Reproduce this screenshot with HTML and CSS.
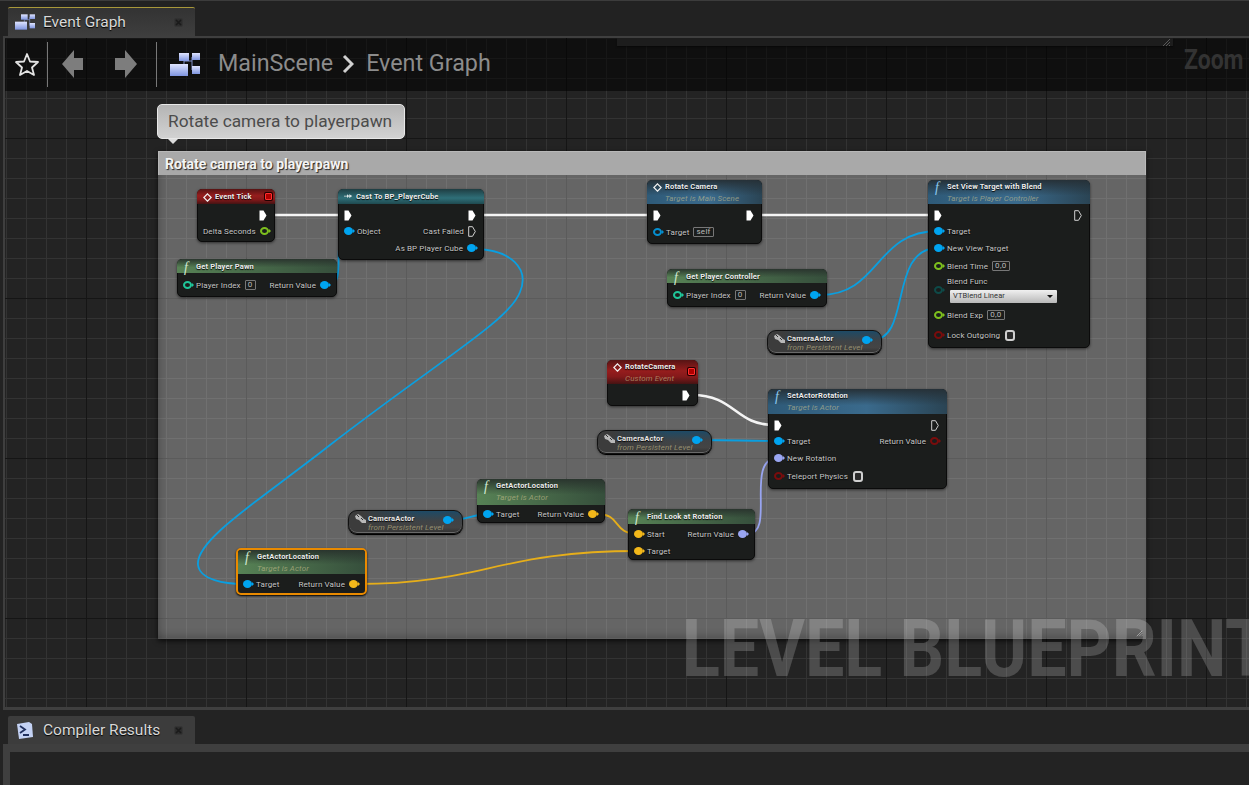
FILE: index.html
```html
<!DOCTYPE html>
<html lang="en">
<head>
<meta charset="utf-8">
<title>Event Graph</title>
<link rel="stylesheet" href="styles.css">
</head>
<body>
<svg class="defs" width="0" height="0" aria-hidden="true">
  <symbol id="exec" viewBox="0 0 8 11"><path d="M.5.5H4.500L7.500 5.500 4.500 10.500H.5Z" fill="#fff"/></symbol>
  <symbol id="exec-o" viewBox="0 0 8 11"><path d="M.7.7H4.500L7.300 5.500 4.500 10.300H.7Z" fill="none" stroke="#d0d0d0" stroke-width="1"/></symbol>
  <symbol id="diamond" viewBox="0 0 11 11"><path d="M5.500 1 10 5.500 5.500 10 1 5.500Z" fill="none" stroke="#f0f0f0" stroke-width="1.500"/></symbol>
  <symbol id="actor" viewBox="0 0 13 10"><path d="M1 2 4 0 7 2 10 5 12 6 12 9 8 9 5 6 2 5Z" fill="#b8b8b8"/><path d="M3 1 5 3M7 4 9 6" stroke="#333" stroke-width="1"/></symbol>
  <symbol id="cast" viewBox="0 0 12 7"><path d="M0 3H4V1L7 3.500 4 6V4H0ZM7 1 11 3.500 7 6Z" fill="#dfe8e8"/></symbol>
  <symbol id="blocks" viewBox="0 0 30 23">
    <defs><linearGradient id="bg" x1="0" y1="0" x2="0" y2="1"><stop offset="0" stop-color="#dfe4ff"/><stop offset="1" stop-color="#7f95e0"/></linearGradient></defs>
    <path d="M14 8H22M14 8V12M22 4V17" stroke="#8090c8" stroke-width="1"/>
    <rect x="9" y="0" width="10" height="8" fill="url(#bg)"/><rect x="22" y="0" width="8" height="7" fill="url(#bg)"/>
    <rect x="0" y="11" width="18" height="12" fill="url(#bg)"/><rect x="22" y="13" width="8" height="8" fill="url(#bg)"/>
  </symbol>
  <symbol id="close" viewBox="0 0 9 9"><rect x=".5" y=".5" width="8" height="8" rx="1" fill="#2c2c2c"/><path d="M2 2 7 7M7 2 2 7" stroke="#1a1a1a" stroke-width="1.500"/></symbol>
</svg>

<header class="well well-top">
  <div class="tab tab-active">
    <svg class="tab-icon" width="20" height="16"><use href="#blocks"/></svg>
    <span class="tab-label">Event Graph</span>
    <svg class="tab-close" width="9" height="9"><use href="#close"/></svg>
  </div>
</header>

<main class="graph-panel">
  <div class="canvas">
    <section class="comment">
      <h2 class="comment-head">Rotate camera to playerpawn</h2>
      <svg class="grip" width="7" height="7" viewBox="0 0 9 9"><path d="M1 8 8 1M4 8 8 4M7 8 8 7" stroke="#b4b4b4" stroke-width="1"/></svg>
    </section>
    <div class="bubble">Rotate camera to playerpawn</div>

    <svg class="wires" width="1244" height="669" viewBox="5 38 1244 669" fill="none">
      <g stroke="#f4f4f4" stroke-width="2.600">
        <path d="M270 215H344M478 215H654M758 215H934"/>
        <path d="M692 395C735 395 735 425 774 425"/>
      </g>
      <g stroke="#0a9fe0" stroke-width="1.800">
        <path d="M476 249C510 250 530 268 520 292C510 320 440 360 330 445C260 500 195 540 198 565C200 580 225 584 244 584"/>
        <path d="M330 285C347 285 330 231 348 231"/>
        <path d="M820 295C880 295 875 231 938 231"/>
        <path d="M872 340C912 340 888 248 938 248"/>
        <path d="M702 440C730 440 750 441 778 441"/>
        <path d="M453 520C465 520 475 514 488 514"/>
      </g>
      <g stroke="#e6ae1a" stroke-width="1.800">
        <path d="M597 514C622 514 612 534 638 534"/>
        <path d="M358 584C480 584 500 551 638 551"/>
      </g>
      <path d="M748 534C776 534 744 458 778 458" stroke="#98a4f0" stroke-width="1.800"/>
    </svg>

    <div class="brand">LEVEL BLUEPRINT</div>

    <article class="node n-tick">
      <div class="head h-red h15"><svg class="ico" width="9" height="9"><use href="#diamond"/></svg><span class="title">Event Tick</span><i class="delegate d-tick"></i></div>
      <div class="body">
        <div class="row r16"><span class="side"></span><span class="side"><svg class="pe"><use href="#exec"/></svg></span></div>
        <div class="row r16"><span class="side"></span><span class="side"><span class="lbl">Delta Seconds</span><i class="pin ring green"></i></span></div>
      </div>
    </article>

    <article class="node n-cast">
      <div class="head h-teal h15"><svg class="ico" width="9" height="6"><use href="#cast"/></svg><span class="title">Cast To BP_PlayerCube</span></div>
      <div class="body">
        <div class="row r16"><span class="side"><svg class="pe"><use href="#exec"/></svg></span><span class="side"><svg class="pe"><use href="#exec"/></svg></span></div>
        <div class="row r16"><span class="side"><i class="pin blue"></i><span class="lbl">Object</span></span><span class="side"><span class="lbl">Cast Failed</span><svg class="pe"><use href="#exec-o"/></svg></span></div>
        <div class="row r18"><span class="side"></span><span class="side"><span class="lbl">As BP Player Cube</span><i class="pin blue"></i></span></div>
      </div>
    </article>

    <article class="node n-pawn">
      <div class="head h-green h14"><span class="fn">f</span><span class="title">Get Player Pawn</span></div>
      <div class="body">
        <div class="row r18"><span class="side"><i class="pin ring mint"></i><span class="lbl">Player Index</span><span class="box">0</span></span><span class="side"><span class="lbl">Return Value</span><i class="pin blue"></i></span></div>
      </div>
    </article>

    <article class="node n-rc">
      <div class="head h-blue h24"><svg class="ico" width="9" height="9"><use href="#diamond"/></svg><div><div class="title">Rotate Camera</div><div class="sub">Target is Main Scene</div></div></div>
      <div class="body">
        <div class="row r16"><span class="side"><svg class="pe"><use href="#exec"/></svg></span><span class="side"><svg class="pe"><use href="#exec"/></svg></span></div>
        <div class="row r18"><span class="side"><i class="pin ring sky"></i><span class="lbl">Target</span><span class="box">self</span></span></div>
      </div>
    </article>

    <article class="node n-svt">
      <div class="head h-blue h24"><span class="fn">f</span><div><div class="title">Set View Target with Blend</div><div class="sub">Target is Player Controller</div></div></div>
      <div class="body">
        <div class="row r16"><span class="side"><svg class="pe"><use href="#exec"/></svg></span><span class="side"><svg class="pe"><use href="#exec-o"/></svg></span></div>
        <div class="row r16"><span class="side"><i class="pin blue"></i><span class="lbl">Target</span></span></div>
        <div class="row r18"><span class="side"><i class="pin blue"></i><span class="lbl">New View Target</span></span></div>
        <div class="row r18"><span class="side"><i class="pin ring green"></i><span class="lbl">Blend Time</span><span class="box">0,0</span></span></div>
        <div class="row r30"><span class="side"><i class="pin ring dteal"></i><span class="stack"><span class="lbl">Blend Func</span><span class="select">VTBlend Linear<i class="caret"></i></span></span></span></div>
        <div class="row r20"><span class="side"><i class="pin ring green"></i><span class="lbl">Blend Exp</span><span class="box">0,0</span></span></div>
        <div class="row r20"><span class="side"><i class="pin ring dred"></i><span class="lbl">Lock Outgoing</span><span class="check"></span></span></div>
      </div>
    </article>

    <article class="node n-gpc">
      <div class="head h-green h14"><span class="fn">f</span><span class="title">Get Player Controller</span></div>
      <div class="body">
        <div class="row r18"><span class="side"><i class="pin ring mint"></i><span class="lbl">Player Index</span><span class="box">0</span></span><span class="side"><span class="lbl">Return Value</span><i class="pin blue"></i></span></div>
      </div>
    </article>

    <article class="pill n-cam1">
      <svg class="pill-ico" width="13" height="10"><use href="#actor"/></svg>
      <div class="pill-text"><div class="title">CameraActor</div><div class="sub">from Persistent Level</div></div>
      <i class="pin blue pill-pin"></i>
    </article>

    <article class="node n-rce">
      <div class="head h-red h24"><svg class="ico" width="9" height="9"><use href="#diamond"/></svg><div><div class="title">RotateCamera</div><div class="sub">Custom Event</div></div><i class="delegate d-rce"></i></div>
      <div class="body">
        <div class="row r16"><span class="side"></span><span class="side"><svg class="pe"><use href="#exec"/></svg></span></div>
      </div>
    </article>

    <article class="node n-sar">
      <div class="head h-blue h25"><span class="fn">f</span><div><div class="title">SetActorRotation</div><div class="sub">Target is Actor</div></div></div>
      <div class="body">
        <div class="row r16"><span class="side"><svg class="pe"><use href="#exec"/></svg></span><span class="side"><svg class="pe"><use href="#exec-o"/></svg></span></div>
        <div class="row r16"><span class="side"><i class="pin blue"></i><span class="lbl">Target</span></span><span class="side"><span class="lbl">Return Value</span><i class="pin ring dred"></i></span></div>
        <div class="row r17"><span class="side"><i class="pin peri"></i><span class="lbl">New Rotation</span></span></div>
        <div class="row r20"><span class="side"><i class="pin ring dred"></i><span class="lbl">Teleport Physics</span><span class="check"></span></span></div>
      </div>
    </article>

    <article class="pill n-cam2">
      <svg class="pill-ico" width="13" height="10"><use href="#actor"/></svg>
      <div class="pill-text"><div class="title">CameraActor</div><div class="sub">from Persistent Level</div></div>
      <i class="pin blue pill-pin"></i>
    </article>

    <article class="node n-gal1">
      <div class="head h-green h26"><span class="fn">f</span><div><div class="title">GetActorLocation</div><div class="sub">Target is Actor</div></div></div>
      <div class="body tight">
        <div class="row r16"><span class="side"><i class="pin blue"></i><span class="lbl">Target</span></span><span class="side"><span class="lbl">Return Value</span><i class="pin yellow"></i></span></div>
      </div>
    </article>

    <article class="pill n-cam3">
      <svg class="pill-ico" width="13" height="10"><use href="#actor"/></svg>
      <div class="pill-text"><div class="title">CameraActor</div><div class="sub">from Persistent Level</div></div>
      <i class="pin blue pill-pin"></i>
    </article>

    <article class="node n-flr">
      <div class="head h-green h15"><span class="fn">f</span><span class="title">Find Look at Rotation</span></div>
      <div class="body tight2">
        <div class="row r16"><span class="side"><i class="pin yellow"></i><span class="lbl">Start</span></span><span class="side"><span class="lbl">Return Value</span><i class="pin peri"></i></span></div>
        <div class="row r17"><span class="side"><i class="pin yellow"></i><span class="lbl">Target</span></span></div>
      </div>
    </article>

    <article class="node n-gal2 selected">
      <div class="head h-green h24"><span class="fn">f</span><div><div class="title">GetActorLocation</div><div class="sub">Target is Actor</div></div></div>
      <div class="body tight2 selected-body">
        <div class="row r16"><span class="side"><i class="pin blue"></i><span class="lbl">Target</span></span><span class="side"><span class="lbl">Return Value</span><i class="pin yellow"></i></span></div>
      </div>
    </article>

    <div class="crumbbar">
      <svg class="star" width="26" height="25" viewBox="0 0 26 25"><path d="M13 2 16 9.500 24 10 18 15.500 20 23 13 19 6 23 8 15.500 2 10 10 9.500Z" fill="none" stroke="#e4e4e4" stroke-width="1.800" stroke-linejoin="round"/></svg>
      <span class="vsep sep-a"></span>
      <svg class="nav nav-back" width="21" height="29" viewBox="0 0 21 29"><path d="M0 14 12 0V8H21V20H12V28Z" fill="#7d7d7d"/></svg>
      <svg class="nav nav-fwd" width="22" height="29" viewBox="0 0 22 29"><path d="M22 14 10 0V8H0V20H10V28Z" fill="#7d7d7d"/></svg>
      <span class="vsep sep-b"></span>
      <svg class="crumb-icon" width="30" height="23"><use href="#blocks"/></svg>
      <span class="crumb">MainScene</span>
      <svg class="chev" width="12" height="20" viewBox="0 0 12 20"><path d="M2 2 10 10 2 18" fill="none" stroke="#d0d0d0" stroke-width="3"/></svg>
      <span class="crumb crumb-last">Event Graph</span>
      <span class="zoom">Zoom</span>
    </div>

    <div class="findstrip"><svg width="9" height="7" viewBox="0 0 9 7"><path d="M1 7 8 0M4 7 8 3M7 7 8 6" stroke="#5a5a5a" stroke-width="1"/></svg></div>
  </div>
</main>

<div class="well well-bottom">
  <div class="tab tab-plain">
    <svg class="tab-icon" width="19" height="19" viewBox="0 0 19 19"><path d="M2 3 14 1 17 3 18 16 4 18Z" fill="#c4d2f4"/><path d="M5 5 10 8.500 5 12M8 14H14" fill="none" stroke="#20305e" stroke-width="1.800"/></svg>
    <span class="tab-label">Compiler Results</span>
    <svg class="tab-close" width="9" height="9"><use href="#close"/></svg>
  </div>
</div>
<section class="results"></section>
</body>
</html>
```
FILE: styles.css
```css
* { box-sizing: border-box; }
html, body { margin: 0; height: 100%; }
body {
  width: 1249px; height: 785px; overflow: hidden;
  display: flex; flex-direction: column;
  background: #232323;
  font-family: Roboto, "Liberation Sans", sans-serif;
}
.defs { position: absolute; }

.well { flex: none; display: flex; align-items: flex-end; padding-left: 8px; }
.well-top { height: 36px; border-top: 1px solid #3c3c3c; background: #222; }
.well-bottom { height: 34px; }
.tab {
  width: 187px; display: flex; align-items: center;
  background: linear-gradient(#333, #3e3e3e);
  border-radius: 2px 2px 0 0; padding-left: 7px;
  color: #d8d8d8; font-size: 15.500px;
  text-shadow: 0 1px 1px #000;
}
.tab-active { height: 29px; border-top: 1px solid #a8983a; }
.tab-plain { height: 28px; background: #3c3c3c; }
.tab-icon { flex: none; margin-right: 9px; }
.tab-active .tab-icon { margin-right: 8px; }
.tab-label { flex: 1; }
.tab-close { flex: none; margin-right: 12px; }

.graph-panel {
  flex: none; height: 674px; margin-left: 3px;
  border: solid #3f3f3f; border-width: 2px 0 3px 2px;
}
.canvas {
  position: relative; width: 1244px; height: 669px; overflow: hidden;
  background-color: #232323;
  background-image:
    linear-gradient(90deg, #151515 1px, transparent 1px),
    linear-gradient(#151515 1px, transparent 1px),
    linear-gradient(90deg, #333 1px, transparent 1px),
    linear-gradient(#333 1px, transparent 1px);
  background-size: 160px 160px, 160px 160px, 20px 20px, 20px 20px;
  background-position: 81px 0, 0 100px, 1px 0, 0 0;
}
.results { flex: 1; margin-left: 3px; border: solid #3f3f3f; border-width: 8px 0 0 7px; background: #232323; }

/* comment box */
.comment {
  position: absolute; left: 153px; top: 113px; width: 988px; height: 488px;
  background: rgba(255, 255, 255, .3);
  box-shadow: 0 2px 5px rgba(0, 0, 0, .7), inset 8px 0 8px -6px rgba(0, 0, 0, .22), inset 0 -9px 8px -6px rgba(0, 0, 0, .2);
}
.comment-head {
  margin: 0; height: 24px; padding: 4px 6px;
  background: #a9a9a9; border: 1px solid #b8b8b8; border-width: 1px 1px 0 1px;
  color: #f4f4f4; font-size: 14px; line-height: 17px; font-weight: 700;
  text-shadow: 1px 1px 1px #222;
}
.grip { position: absolute; right: 3px; bottom: 2px; }
.bubble {
  position: absolute; left: 152px; top: 66px; width: 248px; height: 35px;
  border: 1px solid #e8e8e8; border-radius: 5px;
  background: linear-gradient(#b4b4b4, #d2d2d2);
  color: #4c4c4c; font-size: 17.300px; line-height: 33px; padding-left: 10px;
}
.bubble::after {
  content: ""; position: absolute; left: 10px; top: 34px;
  border: 5px solid transparent; border-top: 5px solid #dcdcdc; border-bottom: 0;
}

.wires { position: absolute; left: 0; top: 0; }

.brand {
  position: absolute; left: 677px; top: 564px; white-space: nowrap;
  font-size: 80px; line-height: 94px; font-weight: 700;
  color: rgba(255, 255, 255, .19);
  transform: scaleX(.875); transform-origin: 0 0;
}

/* nodes */
.node {
  position: absolute;
  background: #1b1d1c; border: 1px solid #0b0b0b; border-radius: 5px;
  box-shadow: 0 1px 3px rgba(0, 0, 0, .55);
  font-size: 8px; color: #c6c6c6;
}
.selected { border: 2px solid #e98a00; box-shadow: 0 1px 2px #000; }
.head {
  position: relative; display: flex; align-items: flex-start; gap: 3px;
  margin: -1px -1px 0; padding: 2px 0 0 6px; border-radius: 5px 5px 0 0;
  color: #ececec;
}
.selected .head { margin: 0; border-radius: 3px 3px 0 0; }
.h14 { height: 14px; padding-top: 3px; } .h15 { height: 15px; padding-top: 3px; } .h24 { height: 24px; } .h25 { height: 25px; } .h26 { height: 26px; }
.h-red { background: linear-gradient(#561414, #961d1d 45%, #84191a 70%, #451313); }
.h-teal { background: linear-gradient(#1f3d42, #2f6f78 60%, #1f4a50); }
.h-green { background: linear-gradient(#2a352e, rgba(42, 53, 46, 0) 60%), linear-gradient(90deg, #578255, #364f3c); }
.h-blue { background: linear-gradient(#263138, rgba(38, 49, 56, 0) 65%), linear-gradient(90deg, #2e5a78, #3a6a8c 55%, #2a4454); }
.ico { flex: none; margin-top: 1px; }
.fn { flex: none; margin: -2px 0 0 1px; font: italic 14px/15px "Liberation Serif", serif; color: #cfe8d0; width: 9px; }
.h-blue .fn { color: #8cc8ee; }
.title { font-weight: 700; font-size: 7.500px; line-height: 10px; letter-spacing: .18px; white-space: nowrap; text-shadow: 0 1px 1px #000; }
.sub { font-style: italic; font-size: 8px; line-height: 11px; letter-spacing: .1px; color: rgba(205, 195, 145, .6); white-space: nowrap; margin-top: 1px; }
.delegate { position: absolute; width: 7px; height: 7px; background: #b00000; border: 1px solid #ff3030; box-shadow: 0 0 0 1px #200; border-radius: 1px; }
.d-tick { right: 3px; top: 4px; }
.d-rce { right: 3px; top: 8px; }

.body { padding: 3px 0 2px; }
.tight { padding: 1px 0 0; }
.tight2 { padding: 2px 0 0; }
.selected-body { padding-bottom: 1px; }
.row { display: flex; justify-content: space-between; align-items: center; padding: 0 7px 0 5px; }
.r16 { height: 16px; } .r17 { height: 17px; } .r18 { height: 18px; } .r20 { height: 20px; } .r30 { height: 30px; }
.side { display: flex; align-items: center; gap: 4px; white-space: nowrap; }
.lbl { font-size: 8px; line-height: 10px; padding-top: 2px; letter-spacing: .12px; text-shadow: 0 1px 1px #000; }
.pe { flex: none; display: block; width: 8px; height: 11px; }

.pin { flex: none; position: relative; display: block; width: 9px; height: 8px; border-radius: 50%; }
.pin::after {
  content: ""; position: absolute; left: 9px; top: 2px;
  border: 2px solid transparent; border-left: 2px solid currentColor; border-right: 0;
}
.blue { background: #00a4f0; color: #00a4f0; }
.yellow { background: #f3b81a; color: #f3b81a; }
.peri { background: #9aa6f2; color: #9aa6f2; }
.ring { border: 2px solid currentColor; background: transparent; }
.ring::after { left: 7px; top: 0; }
.green { color: #7ec01e; }
.mint { color: #1fc69a; }
.sky { color: #058fd0; }
.dteal { color: #0e4a48; }
.dred { color: #7a0c0c; }

.box {
  display: block; min-width: 10px; height: 10px; padding: 0 2px;
  border: 1px solid #777; border-radius: 1px; text-align: center;
  font-size: 8px; line-height: 8px; letter-spacing: .3px; color: #bbb;
}
.check { display: block; width: 10px; height: 11px; margin-left: 1px; border: 2px solid #cfcfcf; border-radius: 3px; background: #2a2a2a; }
.stack { display: flex; flex-direction: column; gap: 0; }
.stack .lbl { padding: 0 0 3px; margin-top: -1px; }
.select {
  position: relative; display: block; width: 107px; height: 13px; margin-left: 3px;
  background: linear-gradient(#f0f0f0, #b8b8b8);
  border-radius: 1px; padding-left: 3px;
  color: #333; font-size: 7.500px; line-height: 12px; letter-spacing: .1px;
}
.caret { position: absolute; right: 4px; top: 5px; border: 3px solid transparent; border-top: 3px solid #111; border-bottom: 0; }

.pill {
  position: absolute; display: flex; align-items: flex-start; height: 24px; width: 115px;
  border: 1px solid #111; border-radius: 9px; padding: 3px 0 0 5px;
  background: linear-gradient(90deg, #3c3c3c 12%, rgba(60, 60, 60, 0) 62%), linear-gradient(#1d4a66, #3f4346 45%, #444 75%, #303030);
  box-shadow: 0 1px 0 #000, inset 0 -1px 0 #6a6a6a, 0 1px 3px rgba(0, 0, 0, .5);
  color: #e8e8e8;
}
.pill-ico { flex: none; margin-right: 1px; }
.pill-text .title { line-height: 9px; }
.pill-text .sub { margin-top: 0; line-height: 9px; }
.pill-pin { position: absolute; right: 10px; top: 5px; }

.n-tick { left: 192px; top: 151px; width: 78px; }
.n-cast { left: 333px; top: 151px; width: 146px; }
.n-pawn { left: 172px; top: 221px; width: 160px; }
.n-rc { left: 642px; top: 142px; width: 115px; }
.n-svt { left: 923px; top: 142px; width: 162px; }
.n-gpc { left: 662px; top: 231px; width: 160px; }
.n-cam1 { left: 762px; top: 292px; }
.n-rce { left: 602px; top: 322px; width: 91px; }
.n-sar { left: 763px; top: 351px; width: 179px; }
.n-cam2 { left: 592px; top: 392px; }
.n-gal1 { left: 472px; top: 441px; width: 128px; }
.n-cam3 { left: 343px; top: 472px; }
.n-flr { left: 623px; top: 471px; width: 127px; }
.n-gal2 { left: 231px; top: 510px; width: 131px; }

/* breadcrumb overlay */
.crumbbar {
  position: absolute; left: 0; top: 0; right: 0; height: 53px;
  background: rgba(0, 0, 0, .55);
  display: flex; align-items: center; padding-left: 9px;
}
.star { flex: none; }
.vsep { flex: none; width: 1px; height: 45px; background: #787878; }
.sep-a { margin-left: 7px; }
.nav { flex: none; }
.nav-back { margin-left: 14px; }
.nav-fwd { margin-left: 32px; }
.sep-b { margin-left: 19px; }
.crumb-icon { flex: none; margin-left: 13px; }
.crumb { margin: 0 0 3px 18px; color: #8c8c8c; font-size: 23.300px; line-height: 30px; }
.chev { flex: none; margin: 0 0 2px 9px; }
.crumb-last { margin-left: 12px; }
.zoom {
  position: absolute; left: 1179px; top: 4px;
  color: #333; font-size: 28px; line-height: 36px; font-weight: 700;
  transform: scaleX(.82); transform-origin: 0 0;
}
.findstrip {
  position: absolute; left: 612px; top: 0; width: 556px; height: 8px;
  background: #1d1d1d; box-shadow: 0 1px 2px rgba(0, 0, 0, .5);
  display: flex; justify-content: flex-end; align-items: flex-end; padding-right: 2px;
}
```
